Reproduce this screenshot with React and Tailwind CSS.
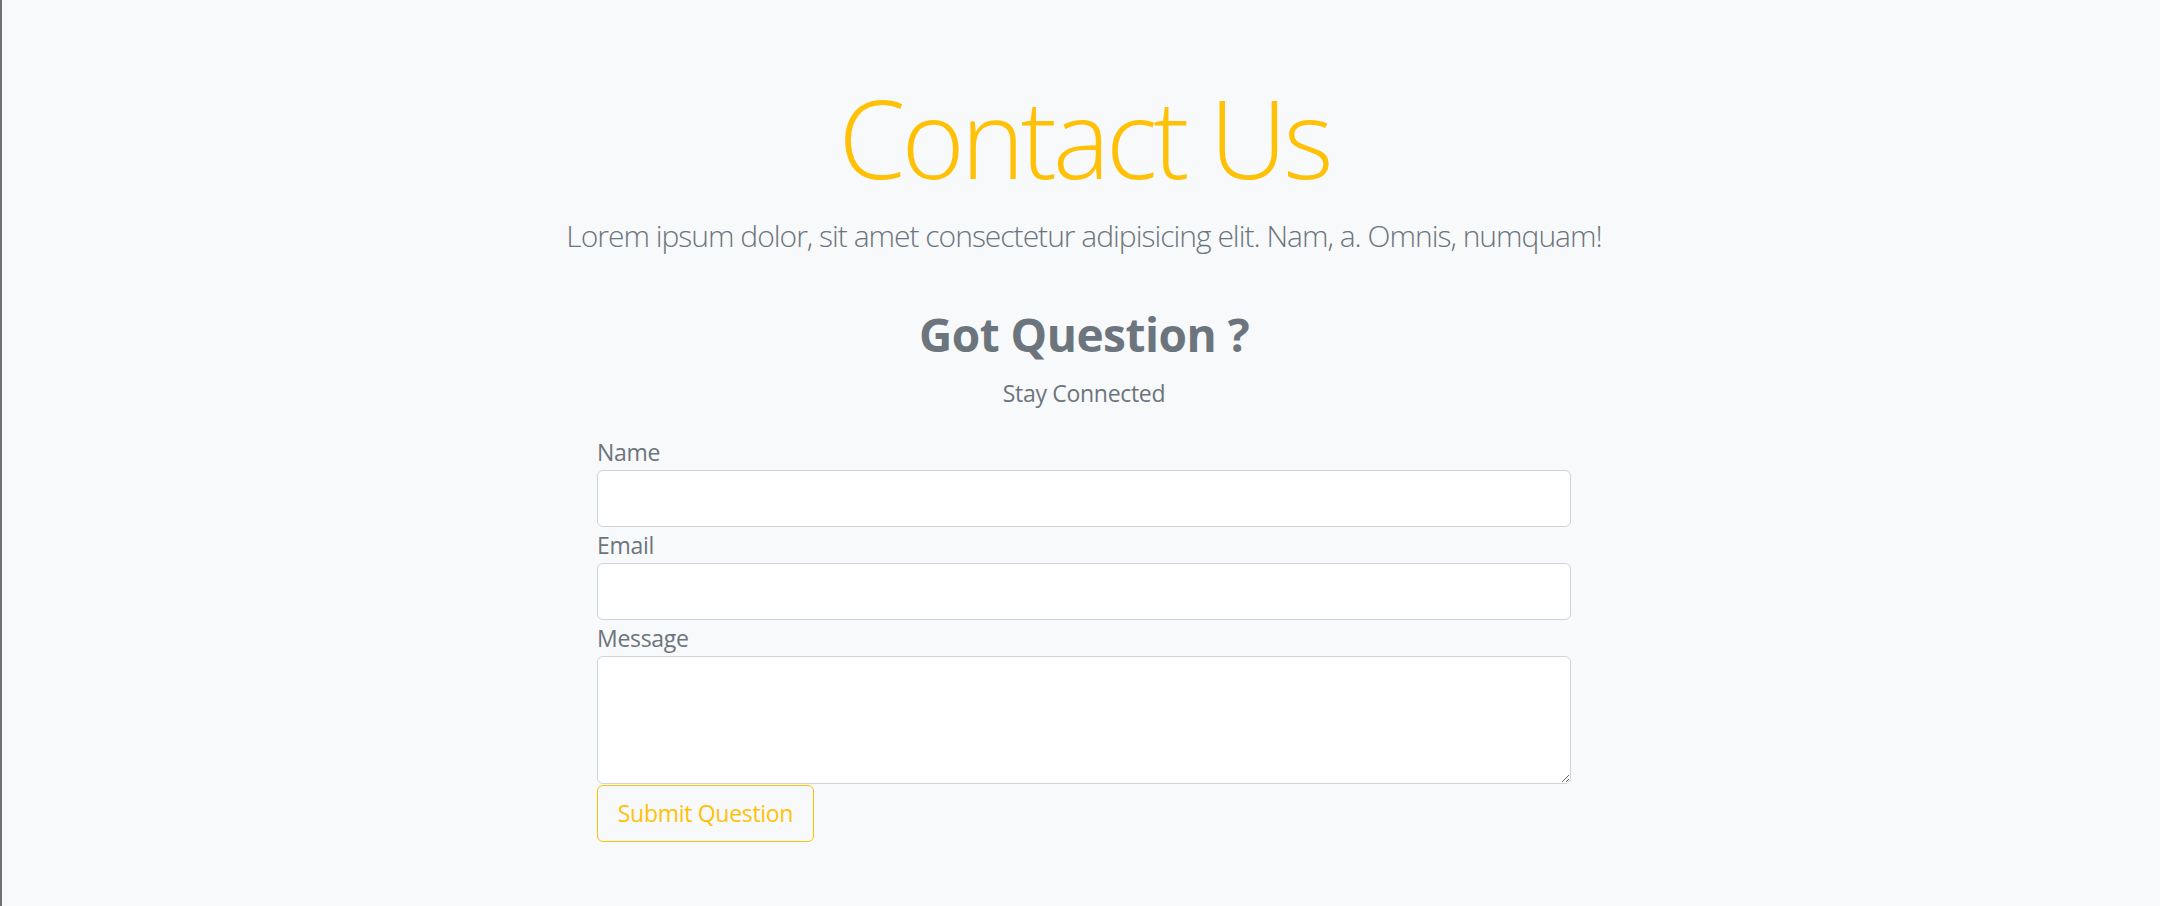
import React from "react";

export default function App() {
  const font = { fontFamily: '"Open Sans", "Noto Sans", Arial, sans-serif' };
  return (
    <div className="flex min-h-[906px] w-full bg-[#f8f9fa]" style={font}>
      <div className="w-[2px] shrink-0 bg-[#707070]" />
      <div className="flex flex-1 flex-col items-center pl-[6px]">
        <h1 className="pt-[73px] text-[108px] font-light leading-[1.2] tracking-[-4px] text-[#ffc107]">
          Contact Us
        </h1>
        <p className="mt-[10px] text-[30px] font-light leading-[45px] tracking-[-1px] text-[#6c757d]">
          Lorem ipsum dolor, sit amet consectetur adipisicing elit. Nam, a. Omnis, numquam!
        </p>
        <h2 className="mt-[49px] text-[46px] font-bold leading-[1.2] tracking-[-0.5px] text-[#6c757d]">
          Got Question ?
        </h2>
        <p className="mt-[13px] text-[23px] leading-[36px] tracking-[-0.3px] text-[#6c757d]">
          Stay Connected
        </p>
        <form className="mt-[23px] flex w-[974px] flex-col">
          <label className="text-[23px] leading-[36px] tracking-[-0.3px] text-[#6c757d]">Name</label>
          <input
            type="text"
            className="h-[57px] w-full rounded-[6px] border border-[#ced4da] bg-white px-[18px] text-[24px] text-[#495057] outline-none"
          />
          <label className="text-[23px] leading-[36px] tracking-[-0.3px] text-[#6c757d]">Email</label>
          <input
            type="email"
            className="h-[57px] w-full rounded-[6px] border border-[#ced4da] bg-white px-[18px] text-[24px] text-[#495057] outline-none"
          />
          <label className="text-[23px] leading-[36px] tracking-[-0.3px] text-[#6c757d]">Message</label>
          <textarea
            rows={3}
            className="block h-[128px] w-full rounded-[6px] border border-[#ced4da] bg-white px-[18px] py-[9px] text-[24px] text-[#495057] outline-none"
          />
          <div className="flex">
            <button
              type="button"
              className="mt-[1px] h-[57px] w-[217px] rounded-[6px] border border-[#ffc107] bg-transparent text-[23px] tracking-[-0.3px] text-[#ffc107]"
            >
              Submit Question
            </button>
          </div>
        </form>
      </div>
    </div>
  );
}
